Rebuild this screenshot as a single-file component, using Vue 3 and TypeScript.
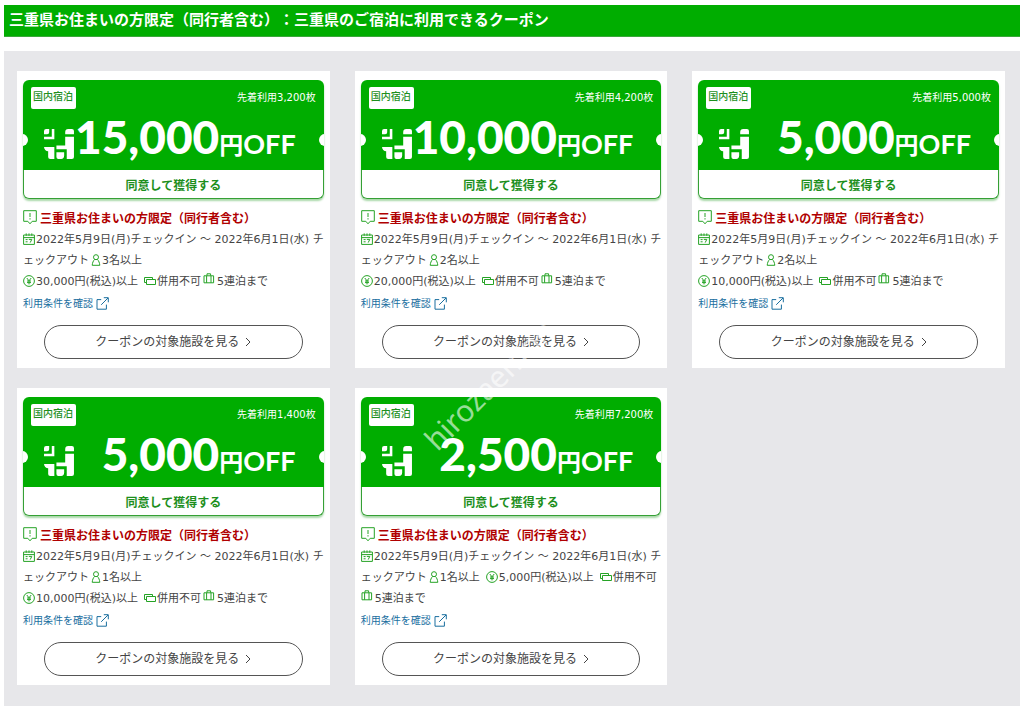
<script setup lang="ts">
type IconName = 'notice' | 'calendar' | 'person' | 'yen' | 'ticket' | 'bag' | 'external'

interface Part {
  icon?: IconName
  text: string
}

interface Coupon {
  id: number
  stock: string
  amount: string
  lines: Part[][]
}

const dates: Part = {
  icon: 'calendar',
  text: '2022年5月9日(月)チェックイン ～ 2022年6月1日(水) チ',
}

function threeLines(people: string, price: string): Part[][] {
  return [
    [dates],
    [{ text: 'ェックアウト' }, { icon: 'person', text: people }],
    [
      { icon: 'yen', text: price },
      { icon: 'ticket', text: '併用不可' },
      { icon: 'bag', text: '5連泊まで' },
    ],
  ]
}

const coupons: Coupon[] = [
  { id: 1, stock: '3,200', amount: '15,000', lines: threeLines('3名以上', '30,000円(税込)以上') },
  { id: 2, stock: '4,200', amount: '10,000', lines: threeLines('2名以上', '20,000円(税込)以上') },
  { id: 3, stock: '5,000', amount: '5,000', lines: threeLines('2名以上', '10,000円(税込)以上') },
  { id: 4, stock: '1,400', amount: '5,000', lines: threeLines('1名以上', '10,000円(税込)以上') },
  {
    id: 5,
    stock: '7,200',
    amount: '2,500',
    lines: [
      [dates],
      [
        { text: 'ェックアウト' },
        { icon: 'person', text: '1名以上' },
        { icon: 'yen', text: '5,000円(税込)以上' },
        { icon: 'ticket', text: '併用不可' },
      ],
      [{ icon: 'bag', text: '5連泊まで' }],
    ],
  },
]
</script>

<template>
  <main class="page">
    <svg class="sprite" aria-hidden="true">
      <symbol id="i-notice" viewBox="0 0 14 15">
        <path d="M.7.7h12.6v10.6H9.2L7 13.8l-2.200-2.500H.7zM7 3v4M7 8.200v1.300" />
      </symbol>
      <symbol id="i-calendar" viewBox="0 0 12 12">
        <path d="M.6 2h10.800v9.400H.6zM.6 4.600h10.800M3.200.4v2.400M6 .4v2.400M8.800.4v2.400M2.600 6.600h2M2.600 8.800h2M5.800 6.400h3L7.200 9.600" />
      </symbol>
      <symbol id="i-person" viewBox="0 0 10 12">
        <circle cx="5" cy="3.200" r="2.500" />
        <path d="M3.600 5.400C2.200 6.800 1.400 9 1.200 11.300h7.600C8.600 9 7.800 6.800 6.400 5.400" />
      </symbol>
      <symbol id="i-yen" viewBox="0 0 12 12">
        <path d="M6 .6a5.400 5.400 0 1 1 0 10.800A5.400 5.400 0 0 1 6 .6zM3.800 3L6 5.800 8.200 3M6 5.800v3.600M4 6h4M4 7.600h4" />
      </symbol>
      <symbol id="i-ticket" viewBox="0 0 12 12">
        <path d="M2.500 7.500H.5v-5h8v2M2.500 4.500h9v5h-9z" />
      </symbol>
      <symbol id="i-bag" viewBox="0 0 12 12">
        <path d="M1 2.800h9.600v7H1zM4 2.600V.8h3.600v1.800M3.600 2.800v7M8 2.800v7" />
      </symbol>
      <symbol id="i-external" viewBox="0 0 13 13">
        <path d="M5.200 2.600H1v9.600h9.400V7.600M7.800.7h4.500v4.600M12 1L5.200 7.800" />
      </symbol>
    </svg>

    <h1 class="heading">三重県お住まいの方限定（同行者含む）：三重県のご宿泊に利用できるクーポン</h1>

    <section class="board">
      <article v-for="c in coupons" :key="c.id" class="card">
        <div class="coupon">
          <div class="face">
            <div class="top">
              <span class="badge">国内宿泊</span>
              <span class="stock">先着利用{{ c.stock }}枚</span>
            </div>
            <div class="price">
              <svg class="logo" viewBox="0 0 31 31" aria-hidden="true">
                <path d="M1 3a2 2 0 0 1 2-2h3v3a2 2 0 0 1-2 2H1zM8.500 1H11v10H1V8.500h7.500zM21.500 6V4a3 3 0 0 1 3-3H28a2 2 0 0 1 2 2v3zM21.500 8.500H30V28a2 2 0 0 1-2 2h-5v-9.500H13V17h8.500zM1 18.500h10V30H7a2 2 0 0 1-2-2v-5.500a4 4 0 0 1-4-4zM13 23.500h7.500V27a3 3 0 0 1-3 3H15a2 2 0 0 1-2-2z" />
              </svg>
              <p class="value">
                <strong class="amount">{{ c.amount }}</strong><span class="unit">円</span><span class="off">OFF</span>
              </p>
            </div>
          </div>
          <button type="button" class="get">同意して獲得する</button>
        </div>

        <h2 class="title">
          <svg class="icon notice"><use href="#i-notice" /></svg>三重県お住まいの方限定（同行者含む）
        </h2>
        <p v-for="(line, n) in c.lines" :key="n" class="line">
          <span v-for="(part, k) in line" :key="k" class="part" :class="part.icon">
            <svg v-if="part.icon" class="icon"><use :href="'#i-' + part.icon" /></svg>{{ part.text }}
          </span>
        </p>
        <a href="#" class="terms">利用条件を確認<svg class="icon external"><use href="#i-external" /></svg></a>
        <a href="#" class="more">クーポンの対象施設を見る<svg class="chevron" viewBox="0 0 6 10" aria-hidden="true"><path d="M1 1l4 4-4 4" /></svg></a>
      </article>
      <span class="watermark" aria-hidden="true">hirozaemon</span>
    </section>
  </main>
</template>

<style>
body {
  background: #fff;
}
</style>

<style scoped>
.page {
  padding: 5px 4px 4px;
  font-family: "DejaVu Sans", "Noto Sans CJK JP", sans-serif;
  font-size: 11px;
  color: #444;
  text-spacing-trim: space-all;
}

.sprite {
  position: absolute;
  width: 0;
  height: 0;
}

.heading {
  margin: 0 0 14px;
  padding: 0 5px 3px;
  border-bottom: 1px solid #3aa83a;
  background: #00ad00;
  color: #fff;
  font-family: "Noto Sans CJK JP", sans-serif;
  font-size: 15px;
  font-weight: 700;
  line-height: 28px;
}

.board {
  position: relative;
  display: grid;
  grid-template-columns: repeat(3, minmax(0, 1fr));
  gap: 20px 25px;
  padding: 20px 15px 21px 13px;
  background: #e7e7ea;
}

.card {
  display: flex;
  flex-direction: column;
  padding: 9px 6px;
  background: #fff;
}

.coupon {
  margin-bottom: 7px;
  border-radius: 6px;
  box-shadow: 0 2px 2px #a9d8a9;
}

.face {
  position: relative;
  height: 90px;
  border-radius: 6px 6px 0 0;
  background: #00ad00;
  color: #fff;
  overflow: hidden;
}

.face::before,
.face::after {
  content: "";
  position: absolute;
  top: 54px;
  width: 12px;
  height: 12px;
  border-radius: 6px;
  background: #fff;
}

.face::before {
  left: -7px;
}

.face::after {
  right: -7px;
}

.top {
  display: flex;
  justify-content: space-between;
  align-items: flex-start;
  padding: 7px 8px 0;
  font-size: 10px;
}

.badge {
  padding: 0 3px 2px 2px;
  border-radius: 2px;
  background: #fff;
  color: #1d8f1d;
  line-height: 20px;
  font-weight: 500;
}

.stock {
  line-height: 22px;
}

.price {
  display: flex;
  justify-content: space-between;
  align-items: center;
  padding: 0 28px 0 20px;
}

.logo {
  flex: none;
  width: 32px;
  height: 32px;
  fill: #fff;
}

.value {
  margin: 0;
  font-family: Lato, "Noto Sans CJK JP", sans-serif;
  font-weight: 700;
  line-height: 56px;
  white-space: nowrap;
}

.amount {
  font-size: 46px;
  font-weight: 900;
}

.unit {
  font-size: 24px;
}

.off {
  font-size: 27px;
}

.get {
  display: block;
  width: 100%;
  height: 29px;
  padding: 0;
  border: 1px solid #35a035;
  border-top: 0;
  border-radius: 0 0 6px 6px;
  background: #fff;
  color: #1d8f1d;
  font-family: "Noto Sans CJK JP", sans-serif;
  font-size: 12px;
  font-weight: 700;
}

.icon {
  flex: none;
  width: 12px;
  height: 12px;
  margin-right: 1px;
  fill: none;
  stroke: #25a325;
  stroke-width: 1;
}

.title {
  display: flex;
  align-items: center;
  margin: 0;
  color: #b00000;
  font-family: "Noto Sans CJK JP", sans-serif;
  font-size: 12px;
  font-weight: 700;
  line-height: 23px;
  white-space: nowrap;
}

.notice {
  width: 14px;
  height: 15px;
  margin-right: 3px;
}

.line {
  display: flex;
  gap: 6px;
  margin: 0;
  line-height: 21px;
  white-space: nowrap;
}

.part {
  display: flex;
  align-items: center;
}

.part.person,
.part.bag {
  margin-left: -4px;
}

.part.bag:first-child {
  margin-left: 0;
}

.part .icon {
  margin-bottom: 1px;
}

.bag .icon {
  margin-right: 2px;
  margin-bottom: 5px;
}

.person .icon {
  width: 10px;
}

.terms {
  display: flex;
  align-items: center;
  align-self: flex-start;
  color: #1a6f9f;
  font-size: 10px;
  line-height: 23px;
  text-decoration: none;
}

.external {
  width: 13px;
  height: 13px;
  margin-left: 3px;
  stroke: #1a6f9f;
}

.more {
  display: flex;
  align-items: center;
  justify-content: center;
  gap: 6px;
  margin: 10px 21px 0;
  border: 1px solid #555;
  border-radius: 17px;
  color: #444;
  font-size: 12px;
  line-height: 32px;
  text-decoration: none;
}

.chevron {
  width: 6px;
  height: 10px;
  fill: none;
  stroke: #444;
}

.watermark {
  position: absolute;
  left: 401px;
  top: 319px;
  color: rgba(255, 255, 255, 0.6);
  font-family: "Noto Sans", sans-serif;
  font-size: 30px;
  line-height: 30px;
  transform: rotate(-45deg);
  pointer-events: none;
}
</style>
